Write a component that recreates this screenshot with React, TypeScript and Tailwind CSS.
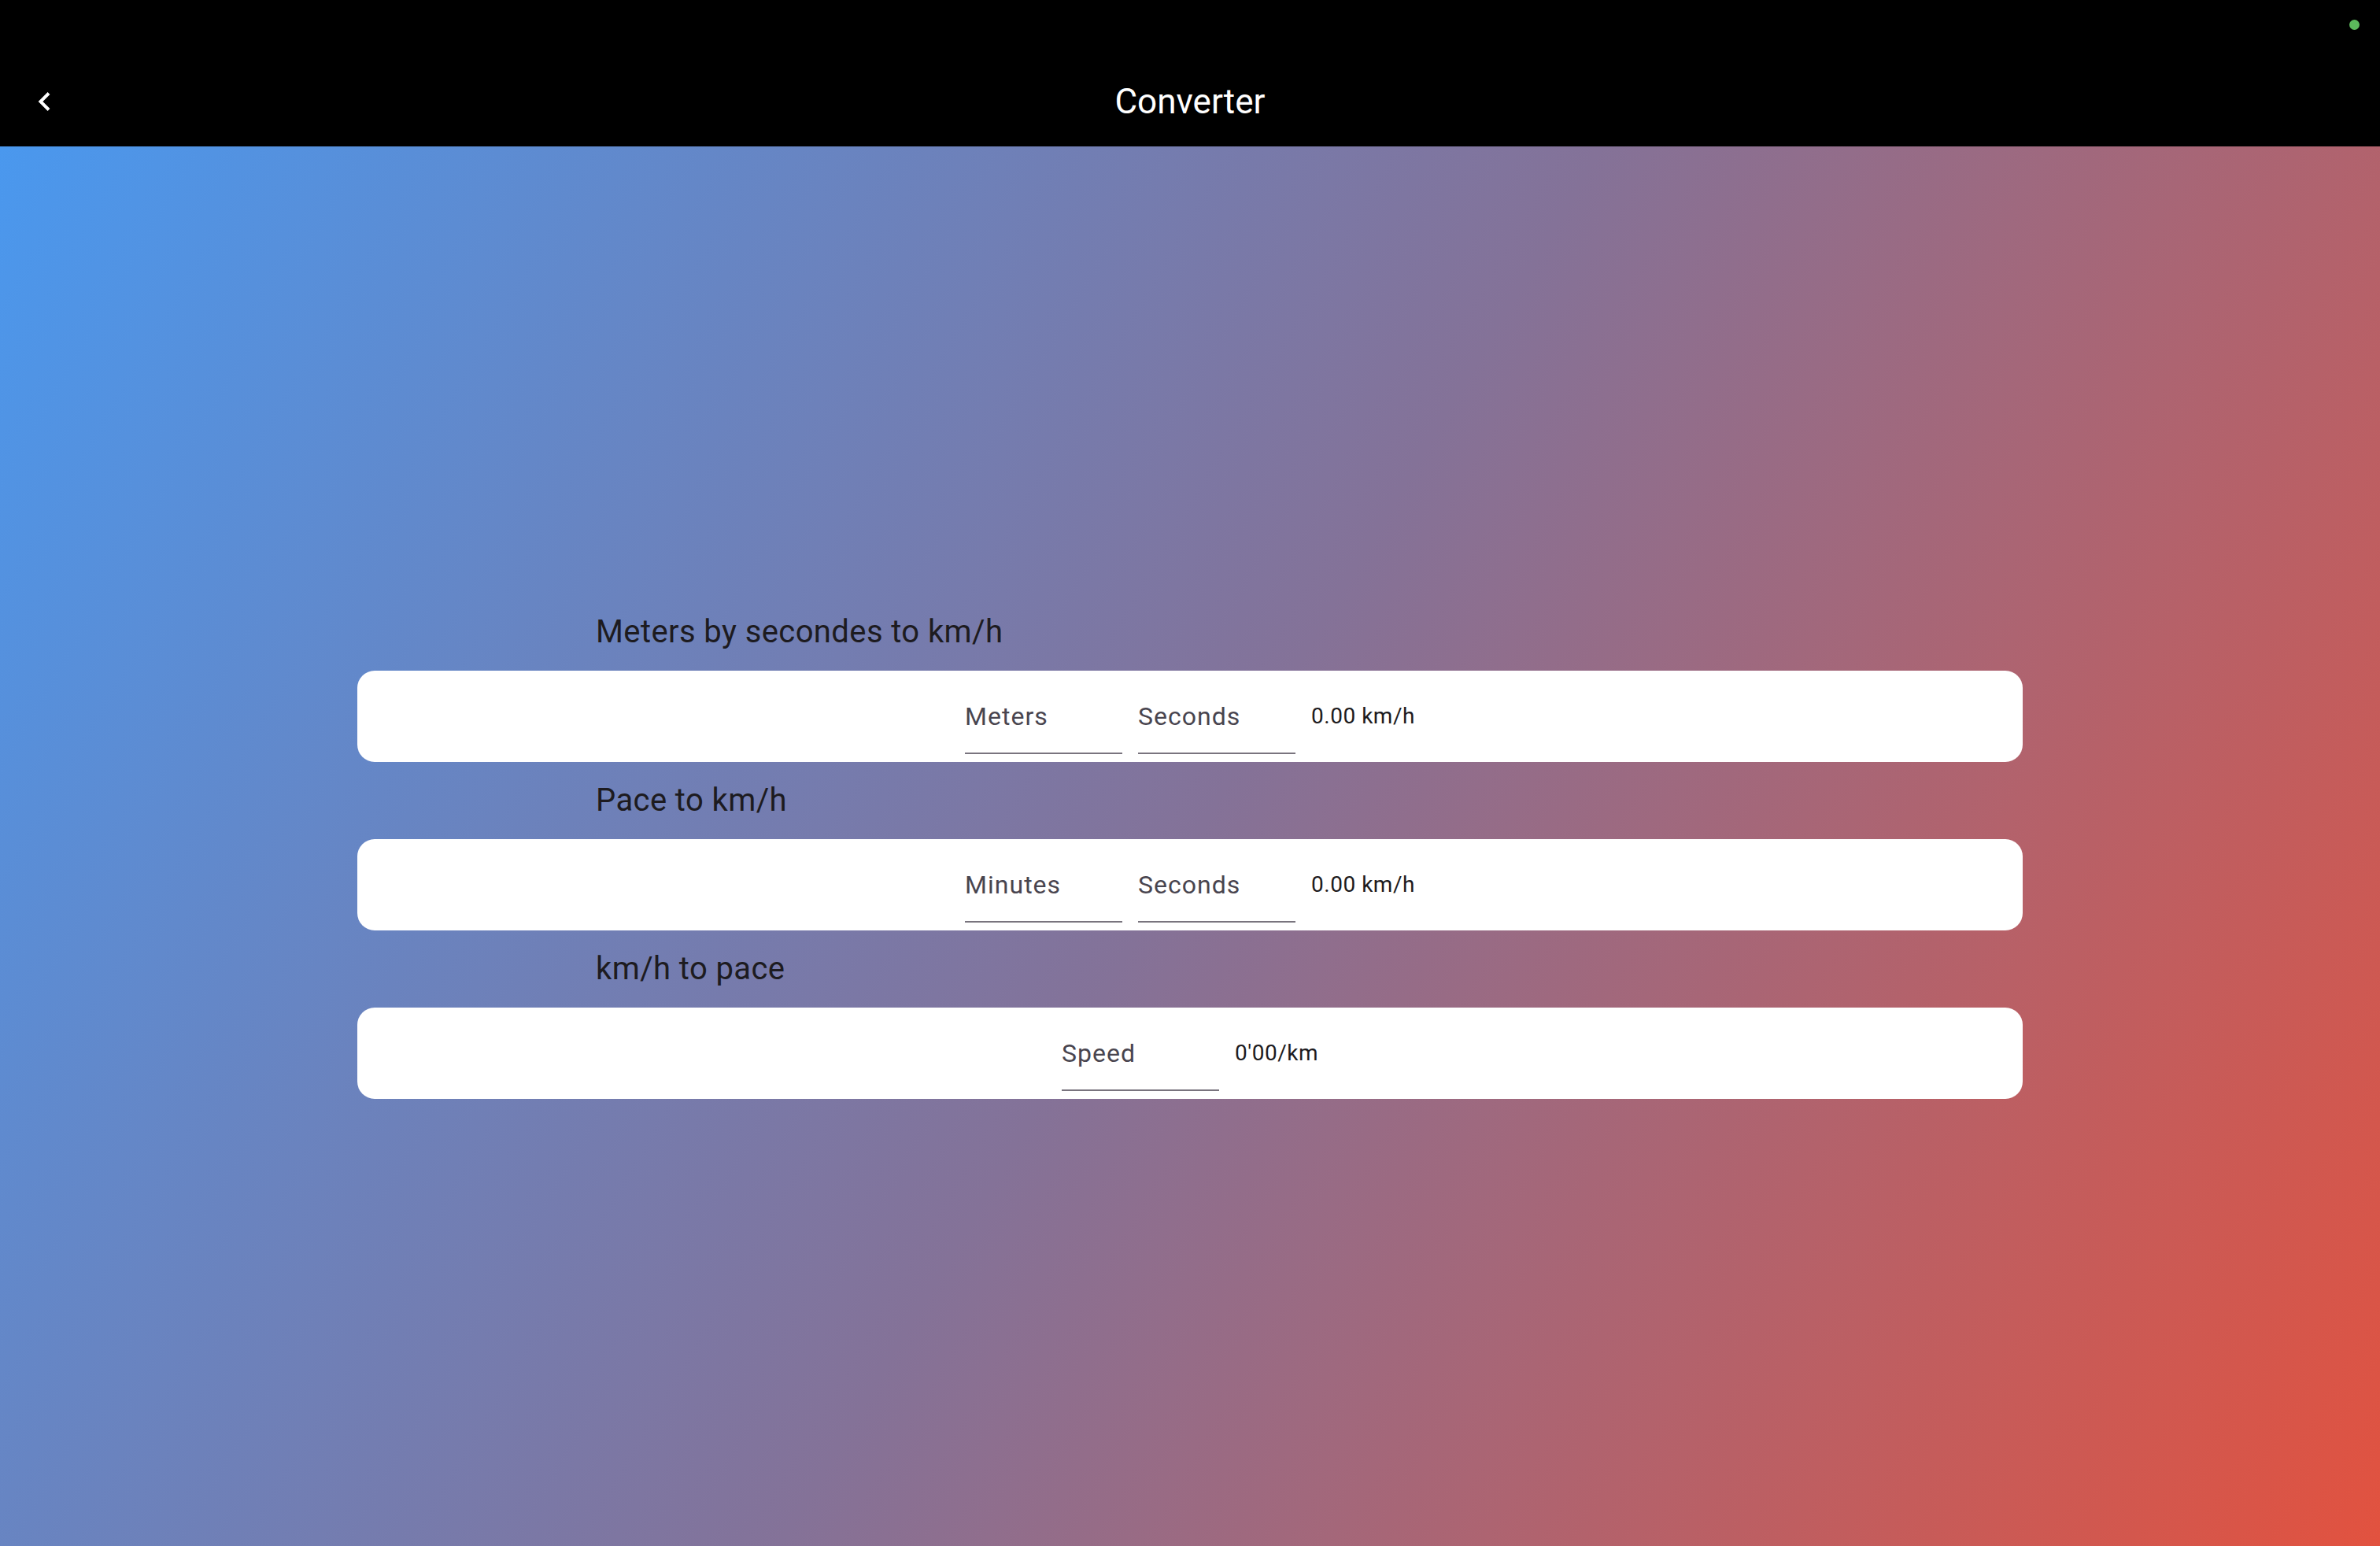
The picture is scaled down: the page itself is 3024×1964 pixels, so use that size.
import React from "react";

type Converter = {
  title: string;
  fields: string[];
  result: string;
};

const converters: Converter[] = [
  { title: "Meters by secondes to km/h", fields: ["Meters", "Seconds"], result: "0.00 km/h" },
  { title: "Pace to km/h", fields: ["Minutes", "Seconds"], result: "0.00 km/h" },
  { title: "km/h to pace", fields: ["Speed"], result: "0'00/km" },
];

function Field({ label }: { label: string }) {
  return (
    <div className="w-[200px] h-[96px] border-b-2 border-[#79747e] pt-[24px]">
      <span className="block text-[32px] leading-[48px] tracking-[1px] text-[#49454f]">{label}</span>
    </div>
  );
}

export default function App() {
  return (
    <div className="w-[3024px] h-[1964px] flex flex-col font-['Roboto',sans-serif] overflow-hidden">
      {/* App bar */}
      <header className="relative h-[186px] bg-black pt-[72px] shrink-0">
        <span className="absolute left-[2985px] top-[25px] w-[13px] h-[13px] rounded-full bg-[#5cb85c]" />
        <div className="grid grid-cols-[1fr_auto_1fr] items-center h-[114px]">
          <div className="pl-[46px] flex items-center">
            <svg width="20" height="28" viewBox="0 0 20 28" fill="none">
              <polyline
                points="16,3.5 5.5,14 16,24.5"
                stroke="white"
                strokeWidth="4"
                strokeLinecap="butt"
                strokeLinejoin="miter"
              />
            </svg>
          </div>
          <h1 className="text-[44px] leading-[56px] text-white">Converter</h1>
          <div />
        </div>
      </header>

      {/* Body */}
      <main className="flex-1 bg-[linear-gradient(120.45deg,#4a98ee_0%,#847298_50%,#e2523f_100%)] pt-[593px]">
        <div className="mx-[454px] flex flex-col gap-[25px]">
          {converters.map((c) => (
            <section key={c.title} className="flex flex-col">
              <h2 className="ml-[303px] mb-[25px] text-[40px] leading-[48px] tracking-[0.4px] text-[#1d1b20]">
                {c.title}
              </h2>
              <div className="h-[116px] bg-white rounded-[22px] pt-[10px] flex justify-center">
                <div className="flex items-start gap-[20px]">
                  {c.fields.map((f) => (
                    <Field key={f} label={f} />
                  ))}
                  <span className="pt-[28px] text-[28px] leading-[40px] tracking-[0.5px] text-[#1d1b20]">
                    {c.result}
                  </span>
                </div>
              </div>
            </section>
          ))}
        </div>
      </main>
    </div>
  );
}
